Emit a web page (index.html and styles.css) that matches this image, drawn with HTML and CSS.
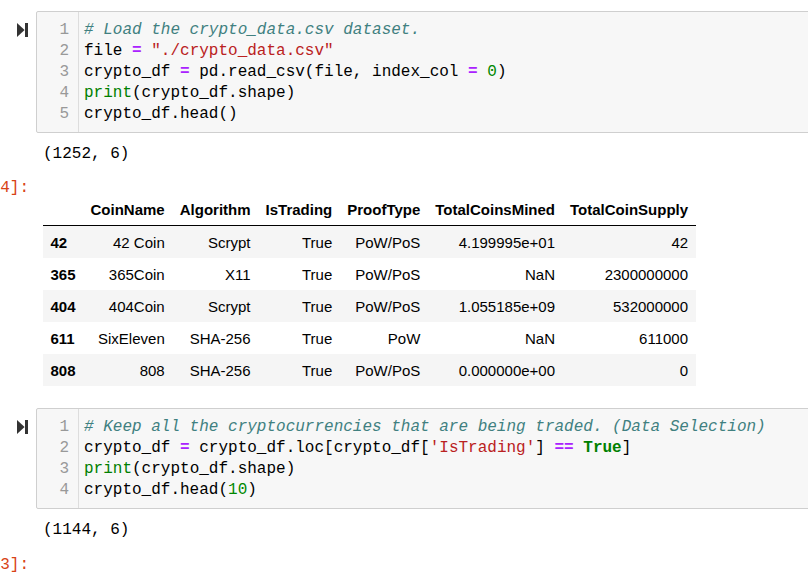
FILE: index.html
```html
<!DOCTYPE html>
<html lang="en">
<head>
<meta charset="utf-8">
<title>Notebook</title>
<link rel="stylesheet" href="styles.css">
</head>
<body>
<div class="notebook">

  <div class="cell-input">
    <div class="run-prompt">
      <svg class="run-icon" width="11" height="14" viewBox="0 0 11 14"><path d="M0 0 L7.6 7 L0 14 Z" fill="#333"/><rect x="8" y="0" width="3" height="14" fill="#333"/></svg>
    </div>
    <div class="input-box">
      <div class="gutter">
        <div class="line">1</div>
        <div class="line">2</div>
        <div class="line">3</div>
        <div class="line">4</div>
        <div class="line">5</div>
      </div>
      <div class="code">
        <div class="line"><span class="cm"># Load the crypto_data.csv dataset.</span></div>
        <div class="line">file <span class="op">=</span> <span class="str">"./crypto_data.csv"</span></div>
        <div class="line">crypto_df <span class="op">=</span> pd.read_csv(file, index_col <span class="op">=</span> <span class="num">0</span>)</div>
        <div class="line"><span class="bi">print</span>(crypto_df.shape)</div>
        <div class="line">crypto_df.head()</div>
      </div>
    </div>
  </div>

  <div class="output first-out">
    <div class="out-prompt"></div>
    <div class="out-content"><div class="stream">(1252, 6)</div></div>
  </div>

  <div class="output result-out">
    <div class="out-prompt">4]:</div>
    <div class="out-content table-wrap">
      <table class="df">
        <thead>
          <tr><th></th><th>CoinName</th><th>Algorithm</th><th>IsTrading</th><th>ProofType</th><th>TotalCoinsMined</th><th>TotalCoinSupply</th></tr>
        </thead>
        <tbody>
          <tr><th>42</th><td>42 Coin</td><td>Scrypt</td><td>True</td><td>PoW/PoS</td><td>4.199995e+01</td><td>42</td></tr>
          <tr><th>365</th><td>365Coin</td><td>X11</td><td>True</td><td>PoW/PoS</td><td>NaN</td><td>2300000000</td></tr>
          <tr><th>404</th><td>404Coin</td><td>Scrypt</td><td>True</td><td>PoW/PoS</td><td>1.055185e+09</td><td>532000000</td></tr>
          <tr><th>611</th><td>SixEleven</td><td>SHA-256</td><td>True</td><td>PoW</td><td>NaN</td><td>611000</td></tr>
          <tr><th>808</th><td>808</td><td>SHA-256</td><td>True</td><td>PoW/PoS</td><td>0.000000e+00</td><td>0</td></tr>
        </tbody>
      </table>
    </div>
  </div>

  <div class="cell-input second-cell">
    <div class="run-prompt">
      <svg class="run-icon" width="11" height="14" viewBox="0 0 11 14"><path d="M0 0 L7.6 7 L0 14 Z" fill="#333"/><rect x="8" y="0" width="3" height="14" fill="#333"/></svg>
    </div>
    <div class="input-box">
      <div class="gutter">
        <div class="line">1</div>
        <div class="line">2</div>
        <div class="line">3</div>
        <div class="line">4</div>
      </div>
      <div class="code">
        <div class="line"><span class="cm"># Keep all the cryptocurrencies that are being traded. (Data Selection)</span></div>
        <div class="line">crypto_df <span class="op">=</span> crypto_df.loc[crypto_df[<span class="str">'IsTrading'</span>] <span class="op">==</span> <span class="kw">True</span>]</div>
        <div class="line"><span class="bi">print</span>(crypto_df.shape)</div>
        <div class="line">crypto_df.head(<span class="num">10</span>)</div>
      </div>
    </div>
  </div>

  <div class="output first-out">
    <div class="out-prompt"></div>
    <div class="out-content"><div class="stream">(1144, 6)</div></div>
  </div>

  <div class="output last-out">
    <div class="out-prompt">3]:</div>
    <div class="out-content"></div>
  </div>

</div>
</body>
</html>
```

FILE: styles.css
```css
html, body {
  margin: 0;
  padding: 0;
  background: #fff;
  overflow: hidden;
}

.notebook {
  width: 830px;
  padding-top: 11px;
  font-family: "Liberation Mono", "DejaVu Sans Mono", monospace;
  font-size: 16px;
  color: #000;
}

.cell-input {
  display: flex;
}

.second-cell {
  margin-top: 22px;
}

.run-prompt {
  width: 36px;
  flex: none;
  box-sizing: border-box;
  display: flex;
  justify-content: flex-end;
  align-items: flex-start;
  padding: 12px 8px 0 0;
}

.run-icon {
  display: block;
}

.input-box {
  flex: 1;
  display: flex;
  background: #f7f7f7;
  border: 1px solid #cfcfcf;
  border-radius: 2px;
}

.gutter {
  width: 42px;
  flex: none;
  box-sizing: border-box;
  border-right: 1px solid #dddddd;
  padding: 7.5px 9px 7.5px 0;
  text-align: right;
  color: #999999;
}

.code {
  padding: 7.5px 0 7.5px 5px;
}

.line {
  height: 21px;
  line-height: 21px;
  white-space: pre;
}

.cm { color: #408080; font-style: italic; }
.op { color: #aa22ff; font-weight: bold; }
.str { color: #ba2121; }
.num { color: #008800; }
.bi { color: #008000; }
.kw { color: #008000; font-weight: bold; }

.output {
  display: flex;
}

.first-out {
  margin-top: 10.5px;
}

.result-out {
  margin-top: 13px;
}

.last-out {
  margin-top: 14px;
}

.out-prompt {
  width: 36px;
  flex: none;
  box-sizing: border-box;
  padding-right: 7px;
  text-align: right;
  color: #d84315;
  line-height: 21px;
  white-space: nowrap;
}

.out-content {
  padding-left: 7px;
}

.stream {
  line-height: 21px;
  white-space: pre;
}

.table-wrap {
  padding-top: 15.5px;
}

.df {
  border-collapse: collapse;
  border: none;
  font-family: "Liberation Sans", Arial, sans-serif;
  font-size: 15px;
  color: #000;
}

.df th,
.df td {
  padding: 7.5px;
  line-height: 17px;
  text-align: right;
  vertical-align: middle;
  white-space: nowrap;
}

.df thead th {
  font-weight: bold;
  border-bottom: 1px solid #000;
}

.df tbody th {
  text-align: left;
  font-weight: bold;
}

.df tbody tr:nth-child(odd) {
  background: #f5f5f5;
}
```
